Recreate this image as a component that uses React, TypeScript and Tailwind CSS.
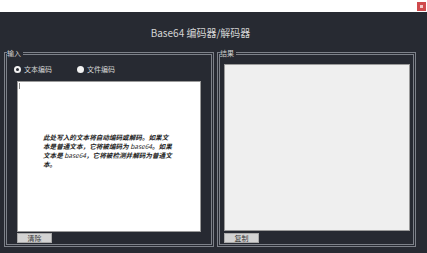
import React from "react";

const cjk = { fontFamily: '"Noto Sans CJK SC", "Noto Sans", sans-serif' };

const Radio: React.FC<{ label: string; checked?: boolean }> = ({ label, checked }) => (
  <label className="flex items-center gap-[3px] text-[7px] leading-[10px] text-[#d6d6d6]">
    {checked ? (
      <span className="w-[7px] h-[7px] rounded-full border-[2px] border-[#f2f2f2] bg-[#2a2d35]" />
    ) : (
      <span className="w-[7px] h-[7px] rounded-full bg-[#f2f2f2]" />
    )}
    {label}
  </label>
);

const SmallButton: React.FC<{ label: string; className?: string }> = ({ label, className = "" }) => (
  <button
    className={`block w-[35px] h-[10px] bg-[#d3d3d3] border border-[#a9a9a9] text-[7px] leading-[8px] text-[#333] ${className}`}
  >
    {label}
  </button>
);

const GroupBox: React.FC<{ title: string; className: string; children: React.ReactNode }> = ({
  title,
  className,
  children,
}) => (
  <div className={`relative h-[195px] border-[3px] border-double border-[#7d8189] ${className}`}>
    <span className="absolute -top-[7px] left-0 bg-[#272a32] pr-[2px] text-[7px] leading-[10px] text-[#cfcfcf]">
      {title}
    </span>
    {children}
  </div>
);

export default function App() {
  return (
    <div className="w-[427px] h-[253px] flex flex-col overflow-hidden" style={cjk}>
      {/* window strip */}
      <div className="h-[12px] bg-white flex justify-end items-start pt-[2px] pr-[1px]">
        <div className="w-[9px] h-[9px] bg-[#cf4a4d] flex items-center justify-center">
          <div className="w-[3px] h-[3px] bg-[#f3c9c9]" />
        </div>
      </div>

      <div className="flex-1 bg-[#272a32] flex flex-col">
        <h1 className="pt-[15px] h-[40px] text-center text-[10px] leading-[12px] text-[#d4d4d4] pr-[26px]">
          Base64 编码器/解码器
        </h1>

        <div className="flex">
          {/* input group */}
          <GroupBox title="输入" className="ml-[4px] w-[210px]">
            <div className="flex flex-col pl-[10px] pr-[10px] pt-[9px]">
              <div className="flex gap-[25px] -ml-[3px] h-[10px]">
                <Radio label="文本编码" checked />
                <Radio label="文件编码" />
              </div>
              <div className="mt-[7px] h-[151px] bg-white border border-[#9a9a9a] flex flex-col">
                <div className="w-[1px] h-[6px] bg-[#888] ml-[1px] mt-[1px]" />
                <p className="mt-[44px] pl-[25px] text-[6.6px] leading-[9px] italic font-bold text-[#1c1c1c]">
                  此处写入的文本将自动编码或解码。如果文
                  <br />
                  本是普通文本，它将被编码为 <span className="font-normal">base64</span>。如果
                  <br />
                  文本是 <span className="font-normal">base64</span>，它将被检测并解码为普通文
                  <br />
                  本。
                </p>
              </div>
              <SmallButton label="清除" className="mt-[1px]" />
            </div>
          </GroupBox>

          {/* result group */}
          <GroupBox title="结果" className="ml-[3px] w-[199px]">
            <div className="flex flex-col pl-[4px] pt-[9px]">
              <div className="w-[186px] h-[167px] bg-[#efefef] border border-[#9a9a9a]" />
              <SmallButton label="复制" className="mt-[2px]" />
            </div>
          </GroupBox>
        </div>
      </div>
    </div>
  );
}
